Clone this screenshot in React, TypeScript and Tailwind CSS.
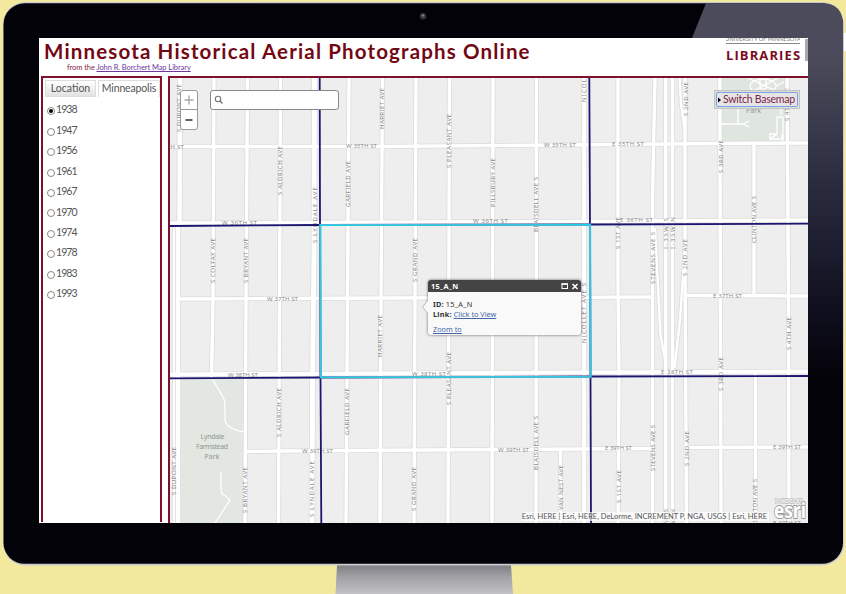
import React from "react";

type Pt = string;

const roads: { d: Pt; w?: number }[] = [
  { d: "M180 76L179.5 225L178 226V526", w: 4 },
  { d: "M174 226V526", w: 1.5 },
  { d: "M214 76L213 300L211.5 378" },
  { d: "M247.5 76L246 300L245 526" },
  { d: "M280.5 76L279.5 300L278.5 526" },
  { d: "M314.5 76L314 250L312.5 380L312 526", w: 4.5 },
  { d: "M349 76L347 376L346 526" },
  { d: "M382.5 76L381 300L380 526" },
  { d: "M416 76L415 300L414 526" },
  { d: "M449.5 76L448.5 376L448 526" },
  { d: "M493 76L492 526" },
  { d: "M536.5 76L536 526" },
  { d: "M560.5 450V526" },
  { d: "M584 76V526", w: 4 },
  { d: "M618 76V280L619 376L618 526" },
  { d: "M655 76L652.5 200V526" },
  { d: "M655 228L660.5 335L666.5 368", w: 2 },
  { d: "M665.7 76V526" },
  { d: "M672.5 76V526" },
  { d: "M679.5 76L681 104L685 132", w: 2 },
  { d: "M685 76V260L686.5 526" },
  { d: "M684 262L680 320L674.5 368", w: 2 },
  { d: "M719.8 76L721 526" },
  { d: "M754 145V294" },
  { d: "M755.5 373V526" },
  { d: "M787 76L788.5 300L789 526" },
  { d: "M166 146.5L380 146.5L560 145L720 143.5L810 143" },
  { d: "M166 223L280 222.5L564 221.5L810 220" },
  { d: "M176 299L282 298.5L651 297" },
  { d: "M687 295.5L810 296" },
  { d: "M166 374.5L282 374L564 372.5L810 371.5", w: 3.6 },
  { d: "M247 451.5L282 451L500 449.5L651 448.5" },
  { d: "M688 447.5L810 447" },
];

const vLabels: [string, number, number, number][] = [
  ["S DUPONT AVE", 179, 84, 132],
  ["S ALDRICH AVE", 280, 146, 195],
  ["GARFIELD AVE", 348, 161, 207],
  ["HARRIET AVE", 382, 88, 129],
  ["S PLEASANT AVE", 449, 114, 168],
  ["PILLSBURY AVE", 492.5, 158, 207],
  ["BLAISDELL AVE S", 536, 177, 232],
  ["NICOLLET AVE S", 584, 42, 102],
  ["S 2ND AVE", 685.5, 82, 116],
  ["S 4TH AVE", 787, 88, 121],
  ["S 3RD AVE", 720.3, 140, 173],
  ["CLINTON AVE S", 754, 196, 243],
  ["S LYNDALE AVE", 315, 187, 243],
  ["S COLFAX AVE", 213, 238, 283],
  ["S BRYANT AVE", 246, 238, 283],
  ["S GRAND AVE", 415, 238, 282],
  ["S 1ST AVE", 618, 217, 249],
  ["STEVENS AVE S", 652.5, 232, 284],
  ["I-35W S", 666, 218, 249],
  ["I-35W N", 672.8, 217, 249],
  ["S 2ND AVE", 685, 239, 276],
  ["HARRIET AVE", 380, 315, 357],
  ["NICOLLET AVE S", 584, 283, 343],
  ["S PLEASANT AVE", 448.5, 352, 405],
  ["S 4TH AVE", 788.5, 317, 350],
  ["S 3RD AVE", 721, 357, 391],
  ["S ALDRICH AVE", 279, 388, 437],
  ["GARFIELD AVE", 346.5, 388, 435],
  ["BLAISDELL AVE S", 536, 416, 470],
  ["STEVENS AVE S", 652.5, 425, 471],
  ["S 2ND AVE", 686.5, 431, 466],
  ["S DUPONT AVE", 174, 447, 495],
  ["S BRYANT AVE", 245, 467, 513],
  ["S LYNDALE AVE", 312, 461, 517],
  ["S GRAND AVE", 414, 467, 511],
  ["VAN NEST AVE", 560.5, 465, 510],
  ["S 1ST AVE", 618.5, 470, 503],
  ["CLINTON AVE S", 755, 479, 526],
  ["I-35W S", 666, 509, 540],
  ["I-35W N", 672.8, 509, 540],
];

const hLabels: [string, number, number, number][] = [
  ["W 35TH ST", 152, 184, 146.5],
  ["W 35TH ST", 346, 377, 146.2],
  ["W 35TH ST", 544, 576, 144.8],
  ["E 35TH ST", 612, 644, 144],
  ["W 36TH ST", 222, 257, 222.3],
  ["W 36TH ST", 473, 508, 221.2],
  ["E 36TH ST", 620, 653, 220],
  ["W 37TH ST", 267, 298, 298.7],
  ["E 37TH ST", 713, 742, 295.7],
  ["W 38TH ST", 228, 258, 374.3],
  ["W 38TH ST", 412, 446, 373.5],
  ["E 38TH ST", 661, 693, 371.8],
  ["W 39TH ST", 302, 333, 450.7],
  ["W 39TH ST", 498, 529, 449.5],
  ["E 39TH ST", 605, 632, 448.2],
  ["E 39TH ST", 773, 801, 447.2],
  ["E 40TH ST", 773, 801, 522.5],
];

const years = ["1938", "1947", "1956", "1961", "1967", "1970", "1974", "1978", "1983", "1993"];

function StreetMap() {
  return (
    <svg width="638" height="445" viewBox="170 78 638 445" className="block">
      <rect x="170" y="78" width="638" height="445" fill="#eeeeee" />
      <rect x="721" y="78" width="66" height="65" fill="#dfe5df" />
      <rect x="180" y="379" width="64" height="145" fill="#e2e7e2" />
      {roads.map((r, i) => (
        <path key={i} d={r.d} fill="none" stroke="#dcdcdc" strokeWidth={(r.w ?? 3) + 2} />
      ))}
      {roads.map((r, i) => (
        <path key={i} d={r.d} fill="none" stroke="#fff" strokeWidth={(r.w ?? 3) + 0.4} />
      ))}
      <g fill="none" stroke="#fff" strokeWidth="1.3">
        <path d="M213 380L223 397Q225 400 225 405V419Q225 424 230 427Q238 432 244 431.5" />
        <path d="M221 472V489Q221 494 225 495.5L230 500L215 523" />
        <ellipse cx="763" cy="86" rx="13" ry="7" />
        <path d="M748 78L778 92M778 78L748 94M760 78V88Q763 91 766 88V78M776 86L784 82" />
        <path d="M738 109V124M721 124H743L749 121M743 124L749 127M781 109V115M783 117H777V134H770V139H782V134M777 134L770 139M783 117V141" />
      </g>
      <g fill="#8c8c8c" fontFamily="'Noto Sans', 'Open Sans', sans-serif" fontSize="6.1">
        {vLabels.map(([t, x, a, b], i) => (
          <text key={i} transform={`translate(${x + 2.2} ${b}) rotate(-90)`} textLength={b - a}>
            {t}
          </text>
        ))}
        {hLabels.map(([t, a, b, y], i) => (
          <text key={i} x={a} y={y + 2.2} textLength={b - a}>
            {t}
          </text>
        ))}
      </g>
      <g fill="#90988d" fontFamily="'Noto Sans', sans-serif" fontSize="7" textAnchor="middle">
        <text x="212.5" y="439" textLength="24">Lyndale</text>
        <text x="212" y="449" textLength="32">Farmstead</text>
        <text x="212" y="459">Park</text>
        <text x="753.5" y="113">Park</text>
      </g>
      <g fill="none" stroke="#1b1672" strokeWidth="1.8">
        <path d="M168 226L320 225L590 224.5L808 223.7" />
        <path d="M168 378.3L320 377.5L591 376.5L808 376" />
        <path d="M319.7 78L320 225L320.5 377L321.3 523" />
        <path d="M589.3 78L590 225L590.5 377L591 523" />
      </g>
      <path d="M320.3 225L590 224.5L590.5 376.7L320.7 377.4Z" fill="none" stroke="#8f9ec0" strokeWidth="2.2" />
      <path d="M320.3 225.2L590 224.7L590.5 376.7L320.7 377.4Z" fill="none" stroke="#14d3ea" strokeWidth="1.4" />
    </svg>
  );
}

function Popup() {
  return (
    <div className="absolute left-[258px] top-[202px] w-[153px] font-['Noto_Sans',sans-serif] text-[7.3px] text-[#333]">
      <div className="relative overflow-hidden rounded-[3px] bg-[#f9f9f9] shadow-[0_0_3px_rgba(0,0,0,0.6)]">
        <div className="flex h-[12px] items-center bg-[#444] pl-[3px] pr-[1px] font-bold text-white">
          <span className="tracking-[0.35px]">15_A_N</span>
          <svg className="ml-auto" width="19" height="9" viewBox="0 0 19 9" fill="none" stroke="#fff">
            <rect x="1" y="2" width="5.5" height="4.5" strokeWidth="1" />
            <path d="M0.5 2H7" strokeWidth="1.6" />
            <path d="M11.5 2L16.5 7M16.5 2L11.5 7" strokeWidth="1.5" />
          </svg>
        </div>
        <div className="h-[43px] pl-[5px] pt-[7px] leading-[10px]">
          <div className="tracking-[0.3px]"><b className="tracking-[0.1px]">ID:</b> 15_A_N</div>
          <div><b className="tracking-[0.25px]">Link:</b> <a className="text-[#4467a5] underline">Click to View</a></div>
          <div className="mt-[5px]"><a className="text-[#4467a5] underline">Zoom to</a></div>
        </div>
      </div>
      <svg className="absolute -left-[6px] top-[19px]" width="7" height="16" viewBox="0 0 7 16">
        <path d="M7 0L0.5 8L7 16Z" fill="#f9f9f9" />
        <path d="M6 1L0.5 8L6 15" fill="none" stroke="#aaa" strokeWidth="0.8" />
      </svg>
    </div>
  );
}

function Sidebar() {
  return (
    <aside className="h-[446px] w-[121px] border-x-2 border-t-2 border-[#7e1029] bg-white pl-[2px] pt-[2px] text-[10.5px] text-[#555]">
      <div className="flex h-[17px] gap-[2px]">
        <div className="flex w-[51px] items-center justify-center border border-[#ddd] bg-linear-to-b from-white to-[#e2e2e2]">Location</div>
        <div className="flex w-[62px] items-center justify-center border-x border-t border-[#ddd] tracking-[-0.15px]">Minneapolis</div>
      </div>
      <div className="mt-[3px] flex flex-col pl-[2px]">
        {years.map((y, i) => (
          <label key={y} className="flex h-[20.45px] items-center text-[10.5px] tracking-[-0.95px]">
            <span className="mr-px mt-[2px] flex size-[8px] items-center justify-center rounded-full border border-[#888] bg-white">
              {i === 0 && <span className="size-[4px] rounded-full bg-black" />}
            </span>
            {y}
          </label>
        ))}
      </div>
    </aside>
  );
}

function Header() {
  return (
    <header className="flex h-[38px] justify-between bg-white">
      <div className="pl-[5px]">
        <h1 className="whitespace-nowrap text-[20.5px] font-bold leading-[26px] tracking-[1.15px] text-[#730713]">
          Minnesota Historical Aerial Photographs Online
        </h1>
        <p className="-mt-px pl-[23px] text-[7.5px] leading-[9px] tracking-[-0.07px] text-[#84283e]">
          from the <a className="text-[#6d399f] underline">John R. Borchert Map Library</a>
        </p>
      </div>
      <div className="flex">
        <div className="w-[74px]">
          <div className="flex h-[3px] items-end justify-center overflow-hidden whitespace-nowrap text-[5.7px] leading-[5px] text-[#777]">UNIVERSITY OF MINNESOTA</div>
          <div className="mt-[2px] h-px bg-[#888]" />
          <div className="mt-[3px] font-['Open_Sans',sans-serif] text-[13px] font-bold leading-[16px] tracking-[1.1px] text-[#7a0b22]">LIBRARIES</div>
        </div>
        <div className="ml-[5px] mt-px h-[22px] w-[3px] bg-[#aaa]" />
      </div>
    </header>
  );
}

export default function App() {
  return (
    <div className="relative h-[594px] w-[846px] overflow-hidden bg-[#f3e99e] font-['Lato',sans-serif]">
      <svg className="absolute left-0 top-0" width="846" height="594" viewBox="0 0 846 594">
        <defs>
          <linearGradient id="glare" x1="0" y1="0" x2="0" y2="1">
            <stop offset="0" stopColor="#4c4c5c" />
            <stop offset="0.15" stopColor="#4a4a5a" />
            <stop offset="0.5" stopColor="#282a3c" />
            <stop offset="0.8" stopColor="#101020" />
            <stop offset="1" stopColor="#030208" />
          </linearGradient>
          <linearGradient id="stand" x1="0" y1="0" x2="0" y2="1">
            <stop offset="0" stopColor="#7e7f84" />
            <stop offset="0.4" stopColor="#a0a0a5" />
            <stop offset="1" stopColor="#c1c1c6" />
          </linearGradient>
        </defs>
        <rect x="843" y="33" width="3" height="18" fill="#fff" />
        <path d="M337 565H511L513 594H335.5Z" fill="url(#stand)" />
        <rect x="3" y="2" width="841" height="563.5" rx="22" fill="#c9c9d0" />
        <rect x="3.5" y="3.3" width="839.5" height="560.5" rx="21" fill="#030208" />
        <path d="M706 3.3H822Q843 3.3 843 25V380H808V38H692Z" fill="url(#glare)" />
        <circle cx="423" cy="16.3" r="3.2" fill="#30363b" />
        <circle cx="423" cy="15.5" r="1.3" fill="#71818a" />
      </svg>
      <div className="relative ml-[39px] mt-[38px] h-[485px] w-[769px] overflow-hidden bg-white">
        <Header />
        <main className="flex gap-[6px] pl-[2px]">
          <Sidebar />
          <section className="relative h-[447px] w-[640px] border-l-2 border-t-2 border-[#7e1029]">
            <StreetMap />
            <div className="absolute left-[10px] top-[12px] w-[18px] rounded-[3px] border border-[#999] bg-white text-center">
              <div className="flex h-[19px] items-center justify-center border-b border-[#999]">
                <svg width="10" height="10" viewBox="0 0 10 10"><path d="M5 0.5V9.5M0.5 5H9.5" stroke="#aaa" strokeWidth="1.4" /></svg>
              </div>
              <div className="flex h-[19px] items-center justify-center">
                <svg width="10" height="10" viewBox="0 0 10 10"><path d="M1.5 5H8.5" stroke="#444" strokeWidth="1.7" /></svg>
              </div>
            </div>
            <div className="absolute left-[40px] top-[12px] flex h-[20px] w-[129px] items-center rounded-[3px] border border-[#888] bg-white pl-[3px]">
              <svg width="10" height="10" viewBox="0 0 10 10" fill="none" stroke="#777">
                <circle cx="4" cy="4" r="2.7" strokeWidth="1.1" />
                <path d="M6 6L8.5 8.5" strokeWidth="1.5" />
              </svg>
            </div>
            <div className="absolute left-[544px] top-[12px] h-[19px] w-[86px] border border-[#c4c4c4] bg-[#dcdcdc] p-px">
              <div className="flex h-full items-center gap-[2px] rounded-[2px] border border-[#7ea2e8] bg-[#e5e5e5] text-[10.5px] text-[#7b2348]">
                <svg width="4" height="6" viewBox="0 0 4 6"><path d="M1 0.5L4 3L1 5.5Z" fill="#000" /></svg>
                <span className="whitespace-nowrap tracking-[-0.25px]">Switch Basemap</span>
              </div>
            </div>
            <Popup />
            <div className="absolute bottom-[2px] right-[39px] flex h-[9px] items-center whitespace-nowrap bg-white/70 pr-[2px] text-[7.5px] leading-[9px] tracking-[0.01px] text-[#555]">
              Esri, HERE | Esri, HERE, DeLorme, INCREMENT P, NGA, USGS | Esri, HERE
            </div>
            <svg className="absolute bottom-0 right-0" width="36" height="26" viewBox="0 0 36 26" fontFamily="'Open Sans', sans-serif">
              <text x="3" y="6.3" fontSize="4.5" fontWeight="700" textLength="27" lengthAdjust="spacingAndGlyphs" fill="#fff" stroke="#aaa" strokeWidth="0.9" paintOrder="stroke">POWERED BY</text>
              <text x="2" y="21.3" fontSize="21" fontWeight="700" textLength="32" lengthAdjust="spacingAndGlyphs" fill="#fff" stroke="#999" strokeWidth="1.8" paintOrder="stroke">esri</text>
            </svg>
          </section>
        </main>
      </div>
    </div>
  );
}
